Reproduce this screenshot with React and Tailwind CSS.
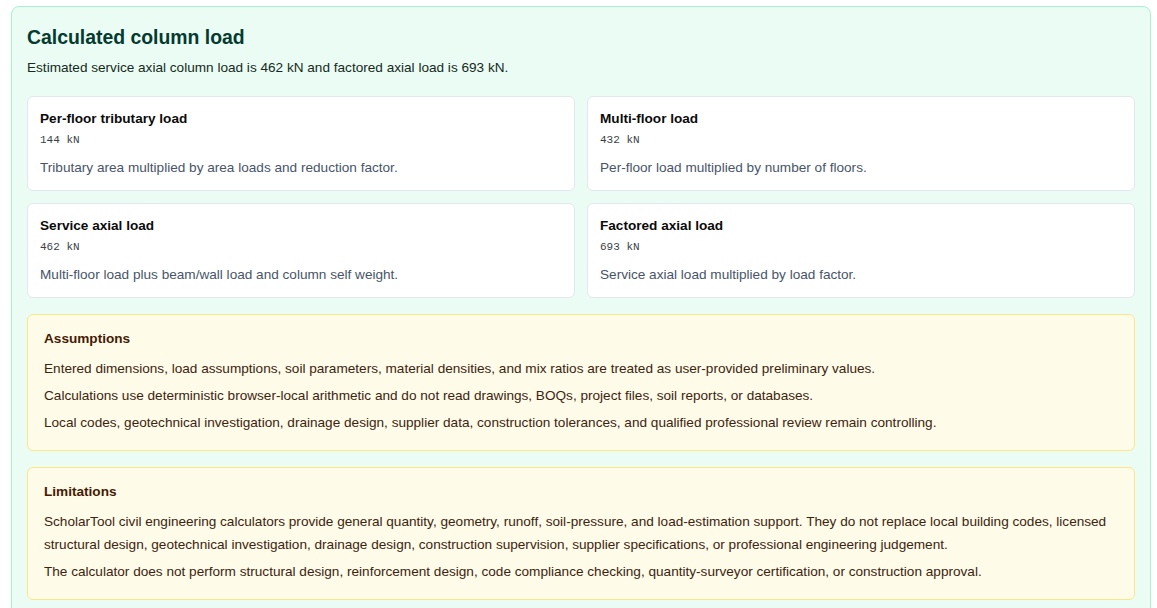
import React from "react";

const loads = [
  { title: "Per-floor tributary load", value: "144", unit: "kN", note: "Tributary area multiplied by area loads and reduction factor." },
  { title: "Multi-floor load", value: "432", unit: "kN", note: "Per-floor load multiplied by number of floors." },
  { title: "Service axial load", value: "462", unit: "kN", note: "Multi-floor load plus beam/wall load and column self weight." },
  { title: "Factored axial load", value: "693", unit: "kN", note: "Service axial load multiplied by load factor." },
];

const assumptions = [
  "Entered dimensions, load assumptions, soil parameters, material densities, and mix ratios are treated as user-provided preliminary values.",
  "Calculations use deterministic browser-local arithmetic and do not read drawings, BOQs, project files, soil reports, or databases.",
  "Local codes, geotechnical investigation, drainage design, supplier data, construction tolerances, and qualified professional review remain controlling.",
];

const limitations = [
  "ScholarTool civil engineering calculators provide general quantity, geometry, runoff, soil-pressure, and load-estimation support. They do not replace local building codes, licensed structural design, geotechnical investigation, drainage design, construction supervision, supplier specifications, or professional engineering judgement.",
  "The calculator does not perform structural design, reinforcement design, code compliance checking, quantity-surveyor certification, or construction approval.",
];

function LoadCard({ title, value, unit, note }) {
  return (
    <div className="rounded-md border border-[#e2e8f0] bg-white px-3 pt-3 pb-3">
      <div className="text-[13.6px] leading-5 font-bold text-[#0b0b0b]">{title}</div>
      <div className="mt-[3px] font-['Liberation_Mono',monospace] text-[11px] leading-4 text-[#3a3f47]">
        {value} {unit}
      </div>
      <p className="mt-[10px] text-[13.6px] leading-5 text-[#475569]">{note}</p>
    </div>
  );
}

function NoteBox({ title, items }) {
  return (
    <div className="rounded-md border border-[#fde68a] bg-[#fefbe8] px-4 pt-4 pb-4">
      <div className="text-[13.6px] leading-4 font-bold text-[#451a03]">{title}</div>
      <div className="mt-[10px] flex flex-col gap-[4px]">
        {items.map((t, i) => (
          <p key={i} className="text-[13.6px] leading-[23px] text-[#3d2410]">{t}</p>
        ))}
      </div>
    </div>
  );
}

export default function App() {
  return (
    <div className="min-h-screen bg-white pt-[6px] pl-[11px] pr-[6px] font-['Liberation_Sans',Arial,sans-serif]">
      <section className="rounded-lg border border-[#a7f3d0] bg-[#ebfcf4] px-[15px] pt-4 pb-4">
        <h2 className="text-[19.4px] leading-7 font-bold text-[#053a30]">Calculated column load</h2>
        <p className="mt-[7px] text-[13.6px] leading-5 text-[#152a22]">
          Estimated service axial column load is 462 kN and factored axial load is 693 kN.
        </p>
        <div className="mt-[18px] grid grid-cols-2 gap-3">
          {loads.map((l) => (
            <LoadCard key={l.title} {...l} />
          ))}
        </div>
        <div className="mt-4 flex flex-col gap-4">
          <NoteBox title="Assumptions" items={assumptions} />
          <NoteBox title="Limitations" items={limitations} />
        </div>
      </section>
    </div>
  );
}
